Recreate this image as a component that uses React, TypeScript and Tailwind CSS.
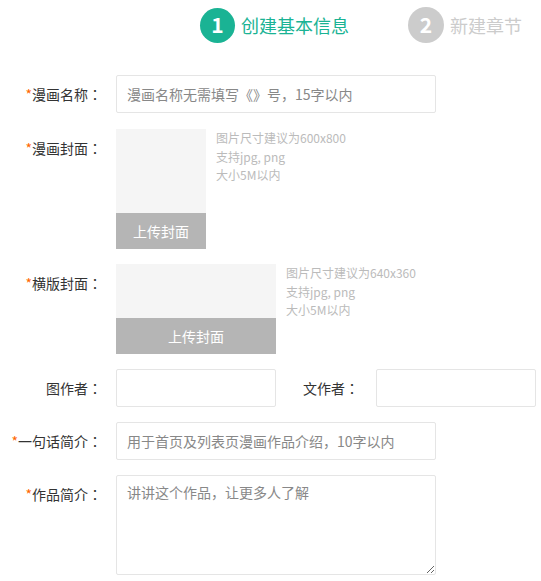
const font = "font-['Microsoft_YaHei','Noto_Sans_CJK_SC',sans-serif]";

function Colon() {
  return <span className="font-['Noto_Sans_CJK_TC',sans-serif]">：</span>;
}

function Label({ text, required }: { text: string; required?: boolean }) {
  return (
    <div className="w-[102px] shrink-0 text-right text-sm leading-[38px] text-[#333]">
      {required && <span className="text-[#f60]">*</span>}
      {text}
      <Colon />
    </div>
  );
}

function Cover({ w, h, hints }: { w: string; h: string; hints: string[] }) {
  return (
    <div className="flex">
      <div className={`${w} ${h} flex flex-col bg-[#f5f5f5]`}>
        <div className="flex-1" />
        <button
          type="button"
          className="h-[36px] bg-[#b5b5b5] text-sm text-white"
        >
          上传封面
        </button>
      </div>
      <div className="ml-[10px] text-xs leading-[18.5px] text-[#bbb]">
        {hints.map((t) => (
          <div key={t}>{t}</div>
        ))}
      </div>
    </div>
  );
}

const inputCls =
  "h-[38px] border border-[#e5e5e5] rounded-[2px] px-[10px] text-sm text-[#333] placeholder-[#888] outline-none";

export default function App() {
  return (
    <div className={`${font} w-[541px] bg-white`}>
      {/* Steps */}
      <div className="flex items-center pl-[200px] pt-[7px]">
        <div className="flex items-center">
          <div className="flex h-[35px] w-[35px] items-center justify-center rounded-full bg-[#1ab394] text-[21px] font-bold text-white">
            1
          </div>
          <span className="ml-[6px] text-lg text-[#1ab394]">创建基本信息</span>
        </div>
        <div className="ml-[59px] flex items-center">
          <div className="flex h-[36px] w-[36px] items-center justify-center rounded-full bg-[#ccc] text-[21px] font-bold text-white">
            2
          </div>
          <span className="ml-[6px] text-lg text-[#ccc]">新建章节</span>
        </div>
      </div>

      {/* Form */}
      <div className="mt-[32px] flex flex-col gap-[15px]">
        <div className="flex gap-[14px]">
          <Label text="漫画名称" required />
          <input
            className={`${inputCls} w-[320px]`}
            placeholder="漫画名称无需填写《》号，15字以内"
          />
        </div>

        <div className="mt-[1px] flex gap-[14px]">
          <Label text="漫画封面" required />
          <Cover
            w="w-[90px]"
            h="h-[120px]"
            hints={["图片尺寸建议为600x800", "支持jpg, png", "大小5M以内"]}
          />
        </div>

        <div className="flex gap-[14px]">
          <Label text="横版封面" required />
          <Cover
            w="w-[160px]"
            h="h-[90px]"
            hints={["图片尺寸建议为640x360", "支持jpg, png", "大小5M以内"]}
          />
        </div>

        <div className="flex items-center">
          <Label text="图作者" />
          <input className={`${inputCls} ml-[14px] w-[160px]`} />
          <div className="ml-[27px] w-[62px] text-sm leading-[38px] text-[#333]">
            文作者
            <Colon />
          </div>
          <input className={`${inputCls} ml-[11px] w-[160px]`} />
        </div>

        <div className="flex gap-[14px]">
          <Label text="一句话简介" required />
          <input
            className={`${inputCls} w-[320px]`}
            placeholder="用于首页及列表页漫画作品介绍，10字以内"
          />
        </div>

        <div className="flex gap-[14px] pb-[6px]">
          <Label text="作品简介" required />
          <textarea
            className="h-[100px] w-[320px] rounded-[2px] border border-[#e5e5e5] px-[10px] py-[6px] text-sm text-[#333] placeholder-[#888] outline-none"
            placeholder="讲讲这个作品，让更多人了解"
          />
        </div>
      </div>
    </div>
  );
}
